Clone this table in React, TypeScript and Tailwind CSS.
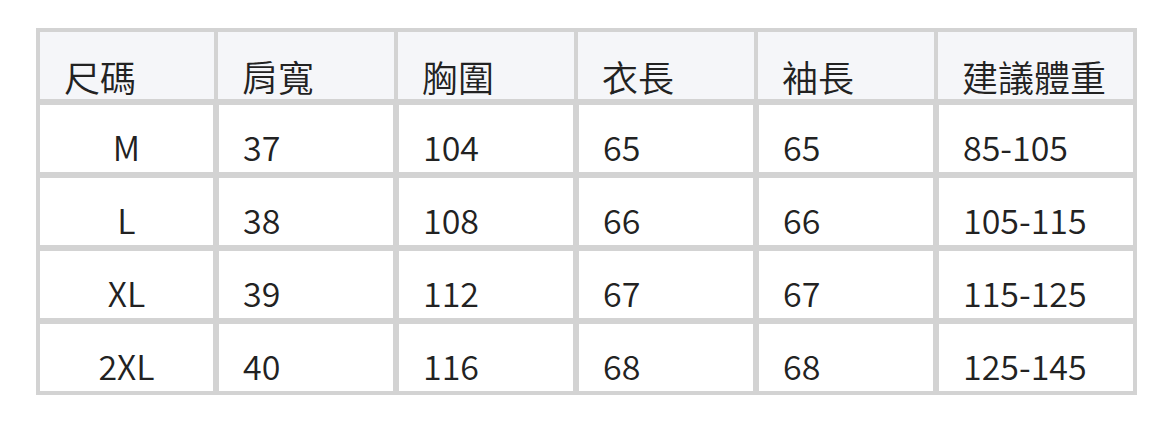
const headers = ["尺碼", "肩寬", "胸圍", "衣長", "袖長", "建議體重"]

const rows = [
  ["M", "37", "104", "65", "65", "85-105"],
  ["L", "38", "108", "66", "66", "105-115"],
  ["XL", "39", "112", "67", "67", "115-125"],
  ["2XL", "40", "116", "68", "68", "125-145"],
]

export default function App() {
  return (
    <div
      className="w-[1172px] h-[422px] bg-white pl-[36px] pt-[28px] text-[#222] font-[350]"
      style={{ fontFamily: '"Noto Sans CJK TC", "Noto Sans", sans-serif' }}
    >
      <div className="grid w-[1101px] grid-cols-[179px_180px_180px_180px_180px_200px] border border-[#d3d3d3]">
        {headers.map((h, i) => (
          <div
            key={h}
            className={
              "bg-[#f5f6f9] border-y-[3px] border-[#d3d3d3] pl-[24px] pt-[21px] text-[36px] leading-[46px] whitespace-nowrap " +
              (i === 0 ? "border-l-[3px] " : "border-l-[2px] ") +
              (i === headers.length - 1 ? "border-r-[3px]" : "border-r-[2px]")
            }
          >
            {h}
          </div>
        ))}
        {rows.map((row) =>
          row.map((cell, i) => (
            <div
              key={row[0] + i}
              className={
                "border-[3px] border-[#d3d3d3] pt-[18px] pb-[1px] text-[34px] leading-[48px] whitespace-nowrap " +
                (i === 0 ? "text-center" : "pl-[24px]")
              }
            >
              {cell}
            </div>
          ))
        )}
      </div>
    </div>
  )
}
